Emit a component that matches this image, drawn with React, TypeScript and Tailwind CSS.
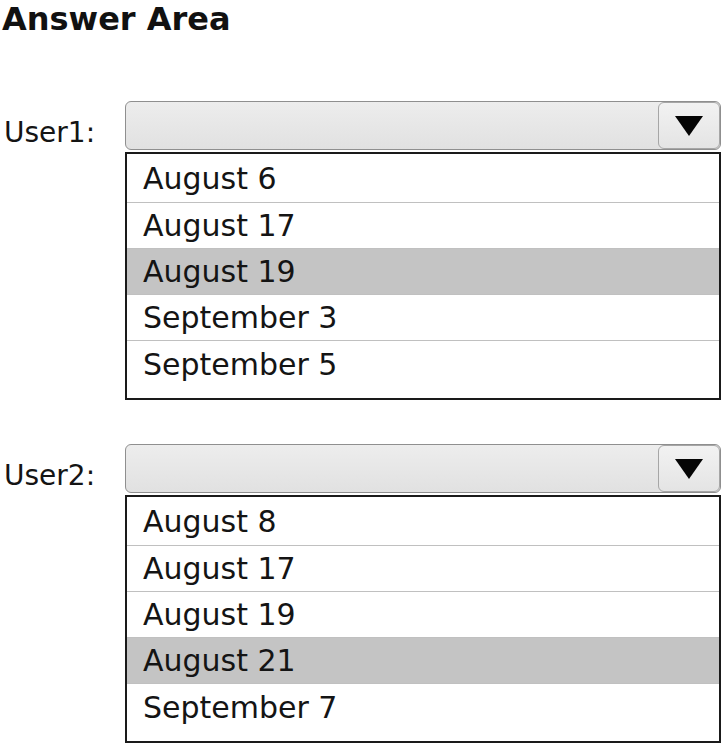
const font = "font-['DejaVu_Sans',Verdana,sans-serif]";

type ListProps = {
  options: string[];
  selected: number;
};

const Dropdown = () => (
  <div className="h-[49px] rounded-[6px] border border-[#8f8f8f] bg-gradient-to-b from-[#ededed] to-[#e1e1e1] flex justify-end">
    <div className="w-[62px] h-full rounded-[6px] border border-[#a6a6a6] bg-gradient-to-b from-[#f2f2f2] to-[#e4e4e4] flex items-center justify-center">
      <svg width="28" height="20" viewBox="0 0 28 20">
        <polygon points="0,0 28,0 14,20" fill="#050505" />
      </svg>
    </div>
  </div>
);

const OptionList = ({ options, selected }: ListProps) => (
  <div className="mt-[2px] border-2 border-[#1a1a1a] bg-white pb-[11px]">
    {options.map((opt, i) => (
      <div
        key={opt}
        className={`flex items-center pl-[16px] text-[30px] text-[#141414] ${
          i === 0 ? "h-[49px]" : "h-[46px]"
        } ${i < options.length - 1 ? "border-b border-[#c0c0c0]" : ""} ${
          i === selected ? "bg-[#c4c4c4]" : ""
        }`}
      >
        {opt}
      </div>
    ))}
  </div>
);

const UserRow = ({ label, options, selected }: { label: string } & ListProps) => (
  <div className="flex">
    <div className="w-[125px] shrink-0 h-[49px] flex items-center pl-[4px] pt-[14px] text-[28px] text-[#141414]">
      {label}
    </div>
    <div className="w-[596px]">
      <Dropdown />
      <OptionList options={options} selected={selected} />
    </div>
  </div>
);

export default function App() {
  return (
    <div className={`w-[723px] h-[744px] bg-white overflow-hidden ${font}`}>
      <h1 className="text-[32px] font-bold leading-[38px] pl-[2px] text-[#111]">Answer Area</h1>
      <div className="mt-[63px]">
        <UserRow
          label="User1:"
          options={["August 6", "August 17", "August 19", "September 3", "September 5"]}
          selected={2}
        />
      </div>
      <div className="mt-[44px]">
        <UserRow
          label="User2:"
          options={["August 8", "August 17", "August 19", "August 21", "September 7"]}
          selected={3}
        />
      </div>
    </div>
  );
}
